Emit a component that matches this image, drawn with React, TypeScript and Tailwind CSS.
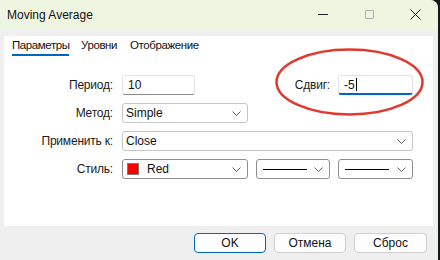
import React from "react";

const Chevron = () => (
  <svg width="9" height="5" viewBox="0 0 9 5" className="shrink-0">
    <path d="M0.5 0.5 L4.5 4.5 L8.5 0.5" fill="none" stroke="#5f5f5f" strokeWidth="1" />
  </svg>
);

const Select = ({ w, children, dark }: { w: string; children?: React.ReactNode; dark?: boolean }) => (
  <div
    className={`${w} h-[20px] bg-white rounded-[3px] border ${dark ? "border-[#8e8e8e]" : "border-[#c6c6c6]"} flex items-center pl-[3px] pr-[6px]`}
  >
    <div className="flex-1 flex items-center min-w-0">{children}</div>
    <Chevron />
  </div>
);

const Label = ({ w, children }: { w: string; children: React.ReactNode }) => (
  <div className={`${w} text-right text-[12px] text-[#1b1b1b] leading-[20px] tracking-[-0.2px]`}>{children}</div>
);

export default function App() {
  return (
    <div
      className="w-[440px] h-[260px] bg-[#16181c] flex overflow-hidden"
      style={{ fontFamily: '"Liberation Sans", Arial, sans-serif' }}
    >
      <div className="relative w-[438px] h-[260px] bg-[#efefef] rounded-tr-[8px] flex flex-col">
        {/* title bar */}
        <div className="h-[29px] bg-[#eef6e1] rounded-tr-[8px] flex items-center pl-[7px] shrink-0">
          <div className="text-[12px] text-[#111] flex-1">Moving Average</div>
          <div className="flex items-center h-full">
            <div className="w-[46px] h-full flex items-center justify-center">
              <div className="w-[10px] h-[1px] bg-[#222]" />
            </div>
            <div className="w-[46px] h-full flex items-center justify-center">
              <div className="w-[9px] h-[9px] border border-[#b0b0b0] rounded-[1px]" />
            </div>
            <div className="w-[46px] h-full flex items-center justify-center">
              <svg width="11" height="11" viewBox="0 0 11 11">
                <path d="M0.5 0.5 L10.5 10.5 M10.5 0.5 L0.5 10.5" stroke="#222" strokeWidth="1" />
              </svg>
            </div>
          </div>
        </div>

        {/* panel */}
        <div className="mt-[7px] ml-[4px] mr-[5px] h-[190px] bg-white flex flex-col">
          <div className="flex items-end pl-[8px] pt-[3px] h-[20px] tracking-[-0.4px] text-[11.5px]">
            <div className="w-[69px] flex flex-col items-start">
              <span className="text-[#111] leading-[15px]">Параметры</span>
              <div className="w-[57px] h-[2px] bg-[#0067c0] mt-[1px]" />
            </div>
            <div className="w-[49px] flex flex-col">
              <span className="text-[#111] leading-[15px]">Уровни</span>
              <div className="h-[2px] mt-[1px]" />
            </div>
            <div className="flex flex-col">
              <span className="text-[#111] leading-[15px]">Отображение</span>
              <div className="h-[2px] mt-[1px]" />
            </div>
          </div>

          <div className="mt-[19px] flex flex-col gap-[8px]">
            {/* row 1 */}
            <div className="flex items-center h-[20px]">
              <Label w="w-[109px]">Период:</Label>
              <div className="ml-[9px] w-[73px] h-[20px] bg-white border border-[#e3e3e3] border-b-[#8a8a8a] rounded-[3px] flex items-center pl-[5px] text-[12px] text-[#111]">
                10
              </div>
              <Label w="w-[135px]">Сдвиг:</Label>
              <div className="ml-[8px] w-[75px] h-[20px] bg-white border border-[#e3e3e3] border-b-2 border-b-[#0067c0] rounded-[3px] flex items-center pl-[5px] text-[12px] text-[#111]">
                -5
                <span className="inline-block w-[1px] h-[13px] bg-black ml-[1px]" />
              </div>
            </div>
            {/* row 2 */}
            <div className="flex items-center h-[20px]">
              <Label w="w-[109px]">Метод:</Label>
              <div className="ml-[9px]">
                <Select w="w-[126px]">
                  <span className="text-[12px] text-[#111]">Simple</span>
                </Select>
              </div>
            </div>
            {/* row 3 */}
            <div className="flex items-center h-[20px]">
              <Label w="w-[109px]">Применить к:</Label>
              <div className="ml-[9px]">
                <Select w="w-[291px]">
                  <span className="text-[12px] text-[#111]">Close</span>
                </Select>
              </div>
            </div>
            {/* row 4 */}
            <div className="flex items-center h-[20px]">
              <Label w="w-[109px]">Стиль:</Label>
              <div className="ml-[9px] flex gap-[8px]">
                <Select w="w-[126px]" dark>
                  <div className="w-[12px] h-[12px] bg-[#ff0000] border border-[#7a7a7a] ml-[1px]" />
                  <span className="text-[12px] text-[#111] ml-[8px]">Red</span>
                </Select>
                <Select w="w-[74px]" dark>
                  <div className="ml-[3px] w-[44px] h-[1px] bg-black" />
                </Select>
                <Select w="w-[75px]" dark>
                  <div className="ml-[3px] w-[44px] h-[1px] bg-black" />
                </Select>
              </div>
            </div>
          </div>
        </div>

        {/* buttons */}
        <div className="mt-[7px] flex justify-end gap-[8px] pr-[11px]">
          <button className="w-[72px] h-[20px] bg-[#fdfdfd] border border-[#0067c0] rounded-[4px] text-[12px] text-[#111] leading-none">
            OK
          </button>
          <button className="w-[72px] h-[20px] bg-[#fdfdfd] border border-[#d0d0d0] rounded-[4px] text-[12px] text-[#111] leading-none">
            Отмена
          </button>
          <button className="w-[73px] h-[20px] bg-[#fdfdfd] border border-[#d0d0d0] rounded-[4px] text-[12px] text-[#111] leading-none">
            Сброс
          </button>
        </div>

        {/* red annotation ellipse */}
        <svg className="absolute left-0 top-0 pointer-events-none" width="438" height="260">
          <ellipse cx="349.5" cy="82" rx="73" ry="32.5" fill="none" stroke="#e2382f" strokeWidth="2.5" />
        </svg>
      </div>
    </div>
  );
}
